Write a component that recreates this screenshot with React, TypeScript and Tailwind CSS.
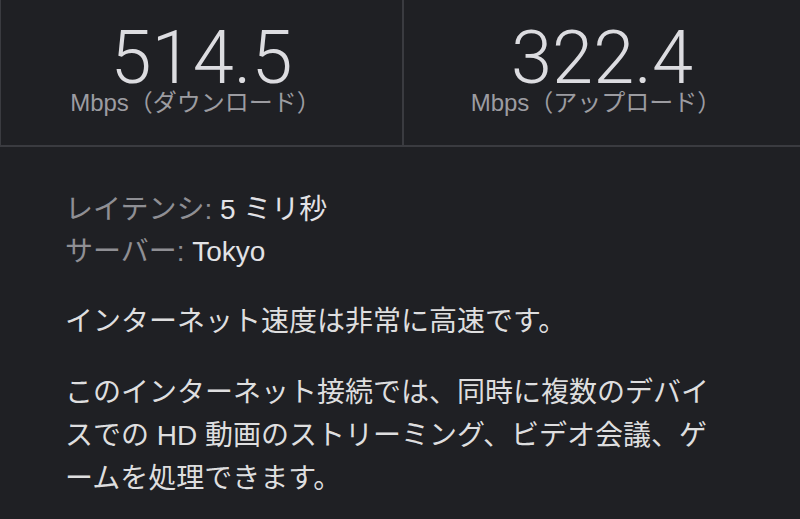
const sans = "font-['Liberation_Sans','Noto_Sans_CJK_JP',sans-serif]";

function Speed({ value, label, first }: { value: string; label: string; first?: boolean }) {
  return (
    <div
      className={`flex flex-col items-center pt-[25px] ${first ? 'border-l border-[#3a3b40]' : 'border-l-2 border-[#3a3b40]'}`}
    >
      <div className="font-['Roboto',sans-serif] font-light text-[74px] leading-[66px] text-[#dcdce0]">
        {value}
      </div>
      <div className={`${sans} text-[24px] leading-[24px] text-[#9c9ca1] mr-[12px]`}>
        Mbps（{label}）
      </div>
    </div>
  );
}

export default function App() {
  return (
    <div className={`w-[800px] h-[519px] overflow-hidden bg-[#1f2024] ${sans}`}>
      {/* speed results */}
      <div className="grid grid-cols-[402px_398px] h-[147px] border-b-2 border-[#3a3b40]">
        <Speed first value="514.5" label="ダウンロード" />
        <Speed value="322.4" label="アップロード" />
      </div>

      {/* details */}
      <div className="px-[65px] pt-[42px] text-[28px]">
        <div className="leading-[42px]">
          <div>
            <span className="text-[#8f8f94]">レイテンシ:</span>{' '}
            <span className="text-[#e2e2e6]">5 ミリ秒</span>
          </div>
          <div>
            <span className="text-[#8f8f94]">サーバー:</span>{' '}
            <span className="text-[#e2e2e6]">Tokyo</span>
          </div>
        </div>
        <p className="mt-[27px] leading-[43px] text-[#dededf]">
          インターネット速度は非常に高速です。
        </p>
        <p className="mt-[28px] leading-[43px] text-[#dededf] w-[665px] [line-break:loose]">
          このインターネット接続では、同時に複数のデバイスでの HD 動画のストリーミング、ビデオ会議、ゲームを処理できます。
        </p>
      </div>
    </div>
  );
}
